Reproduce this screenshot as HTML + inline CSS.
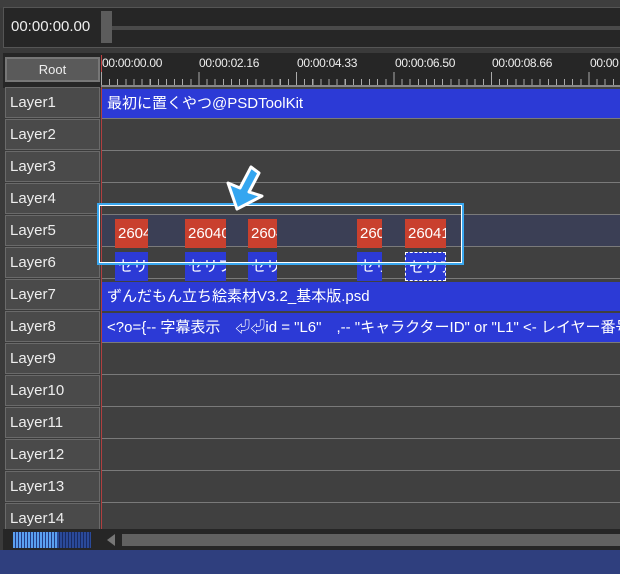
<!DOCTYPE html>
<html><head><meta charset="utf-8"><style>
*{margin:0;padding:0;box-sizing:border-box}
body{width:620px;height:574px;background:#3a3a3a;position:relative;overflow:hidden;font-family:"Liberation Sans","Noto Sans CJK JP",sans-serif;color:#fff}
.a{position:absolute}
.lab{position:absolute;left:5px;width:95px;height:31px;background:#4a4a4a;border:1px solid #6a6a6a;font-size:15px;line-height:29px;padding-left:4px;color:#eee}
.row{position:absolute;left:101px;right:0;height:32px;background:#404040;border-bottom:1px solid #7a7a7a}
.clip{position:absolute;height:29px;font-size:15px;line-height:29px;padding-left:5px;white-space:nowrap;overflow:hidden;color:#fff}
.blue{background:#2c3ad6}
.red{background:#c9402e}
.t{position:absolute;top:56px;font-size:12px;color:#eee;white-space:nowrap;letter-spacing:-0.3px}
</style></head><body>
<div class="a" style="left:0;top:0;width:620px;height:8px;background:#3e3e3e"></div>
<div class="a" style="left:3px;top:7px;width:617px;height:41px;background:#262626;border:1px solid #555;border-right:none"></div>
<div class="a" style="left:11px;top:18px;font-size:15px;color:#eee">00:00:00.00</div>
<div class="a" style="left:101px;top:26px;width:519px;height:4px;background:#4a4a4a"></div>
<div class="a" style="left:101px;top:11px;width:11px;height:32px;background:#5c5c5c"></div>
<div class="a" style="left:3px;top:53px;width:617px;height:35px;background:#262626"></div>
<div class="a" style="left:5px;top:57px;width:95px;height:25px;background:#5a5a5a;border:2px solid #777;font-size:13px;text-align:center;line-height:21px;color:#eee">Root</div>
<div class="a" style="left:101px;top:55px;width:1px;height:33px;background:#c04040"></div>
<div class="t" style="left:102px">00:00:00.00</div>
<div class="t" style="left:199px">00:00:02.16</div>
<div class="t" style="left:297px">00:00:04.33</div>
<div class="t" style="left:395px">00:00:06.50</div>
<div class="t" style="left:492px">00:00:08.66</div>
<div class="t" style="left:590px">00:00</div>
<div class="a" style="left:101px;top:79px;width:519px;height:6px;background:repeating-linear-gradient(90deg,#aaa 0 1px,transparent 1px 8.125px)"></div>
<div class="a" style="left:101px;top:72px;width:519px;height:13px;background:repeating-linear-gradient(90deg,#aaa 0 1px,transparent 1px 97.5px)"></div>
<div class="a" style="left:101px;top:85px;width:519px;height:2px;background:#888"></div>

<div class="row" style="top:87px"></div><div class="lab" style="top:87px">Layer1</div>
<div class="row" style="top:119px"></div><div class="lab" style="top:119px">Layer2</div>
<div class="row" style="top:151px"></div><div class="lab" style="top:151px">Layer3</div>
<div class="row" style="top:183px"></div><div class="lab" style="top:183px">Layer4</div>
<div class="row" style="top:215px;background:#3b3f55"></div><div class="lab" style="top:215px">Layer5</div>
<div class="row" style="top:247px"></div><div class="lab" style="top:247px">Layer6</div>
<div class="row" style="top:279px"></div><div class="lab" style="top:279px">Layer7</div>
<div class="row" style="top:311px"></div><div class="lab" style="top:311px">Layer8</div>
<div class="row" style="top:343px"></div><div class="lab" style="top:343px">Layer9</div>
<div class="row" style="top:375px"></div><div class="lab" style="top:375px">Layer10</div>
<div class="row" style="top:407px"></div><div class="lab" style="top:407px">Layer11</div>
<div class="row" style="top:439px"></div><div class="lab" style="top:439px">Layer12</div>
<div class="row" style="top:471px"></div><div class="lab" style="top:471px">Layer13</div>
<div class="row" style="top:503px;border:none;height:27px"></div><div class="lab" style="top:503px;height:27px">Layer14</div>
<div class="a" style="left:101px;top:87px;width:1px;height:443px;background:#b04040"></div>

<div class="clip blue" style="left:102px;top:89px;right:0">最初に置くやつ@PSDToolKit</div>
<div class="clip blue" style="left:102px;top:282px;right:0">ずんだもん立ち絵素材V3.2_基本版.psd</div>
<div class="clip blue" style="left:102px;top:313px;right:0">&lt;?o={-- 字幕表示　⏎⏎id = "L6"　,-- "キャラクターID" or "L1" &lt;- レイヤー番号</div>

<div class="clip red" style="left:115px;top:219px;width:33px;padding-left:3px">26040</div>
<div class="clip red" style="left:185px;top:219px;width:41px;padding-left:3px">26040</div>
<div class="clip red" style="left:248px;top:219px;width:29px;padding-left:3px">2604</div>
<div class="clip red" style="left:357px;top:219px;width:25px;padding-left:3px">2604</div>
<div class="clip red" style="left:405px;top:219px;width:41px;padding-left:3px">26041</div>
<div class="clip blue" style="left:115px;top:252px;width:33px;padding-left:3px">セリフ</div>
<div class="clip blue" style="left:185px;top:252px;width:41px;padding-left:3px">セリフ</div>
<div class="clip blue" style="left:248px;top:252px;width:29px;padding-left:3px">セリ</div>
<div class="clip blue" style="left:357px;top:252px;width:25px;padding-left:3px">セリ</div>
<div class="clip blue" style="left:405px;top:252px;width:41px;padding-left:3px;border:1px dashed #fff">セリフ</div>

<div class="a" style="left:97px;top:203px;width:367px;height:62px;border:2px solid #3aa8f0;box-shadow:inset 0 0 0 1px #fff"></div>
<svg class="a" style="left:222px;top:160px" width="46" height="54" viewBox="0 0 46 54"><path d="M15 49 L6 23 L18 28 L29 7 L37 13 L27 32 L40 36 Z" fill="#34a6f0" stroke="#fff" stroke-width="3" stroke-linejoin="round"/></svg>

<div class="a" style="left:3px;top:529px;width:617px;height:21px;background:#262626"></div>
<div class="a" style="left:13px;top:532px;width:78px;height:16px;background:repeating-linear-gradient(90deg,#5aa0f0 0 2px,#243a80 2px 3px)"></div>
<div class="a" style="left:57px;top:532px;width:34px;height:16px;background:repeating-linear-gradient(90deg,#2a4a9a 0 2px,#1a2a60 2px 3px)"></div>
<div class="a" style="left:107px;top:534px;width:0;height:0;border-top:6px solid transparent;border-bottom:6px solid transparent;border-right:8px solid #777"></div>
<div class="a" style="left:122px;top:534px;width:498px;height:12px;background:#616161"></div>
<div class="a" style="left:0;top:550px;width:620px;height:24px;background:#2f3f7e"></div>
</body></html>
